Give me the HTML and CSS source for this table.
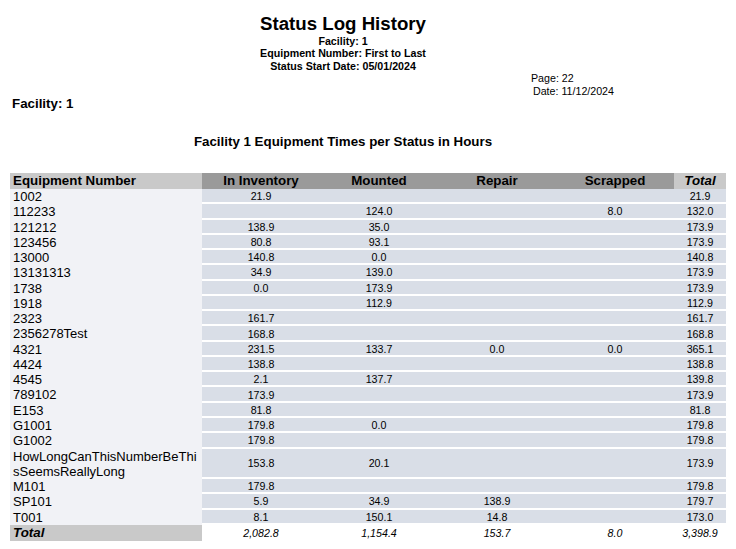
FILE: index.html
```html
<!DOCTYPE html>
<html>
<head>
<meta charset="utf-8">
<title>Status Log History</title>
<link rel="stylesheet" href="styles.css">
</head>
<body>
<div class="report-head">
  <h1 class="title">Status Log History</h1>
  <div class="sub">Facility: 1</div>
  <div class="sub">Equipment Number: First to Last</div>
  <div class="sub">Status Start Date: 05/01/2024</div>
</div>
<div class="meta">
  <div>Page: 22</div>
  <div class="meta-date">Date: 11/12/2024</div>
</div>
<div class="facility">Facility: 1</div>
<h2 class="section">Facility 1 Equipment Times per Status in Hours</h2>
<table class="grid">
  <colgroup>
    <col class="c-eq"><col class="c-st"><col class="c-st"><col class="c-st"><col class="c-st"><col class="c-tot">
  </colgroup>
  <thead>
    <tr>
      <th class="h-eq">Equipment Number</th>
      <th class="h-st">In Inventory</th>
      <th class="h-st">Mounted</th>
      <th class="h-st">Repair</th>
      <th class="h-st">Scrapped</th>
      <th class="h-tot">Total</th>
    </tr>
  </thead>
  <tbody>
    <tr><td class="eq">1002</td><td class="n">21.9</td><td class="n"></td><td class="n"></td><td class="n"></td><td class="n">21.9</td></tr>
    <tr><td class="eq">112233</td><td class="n"></td><td class="n">124.0</td><td class="n"></td><td class="n">8.0</td><td class="n">132.0</td></tr>
    <tr><td class="eq">121212</td><td class="n">138.9</td><td class="n">35.0</td><td class="n"></td><td class="n"></td><td class="n">173.9</td></tr>
    <tr><td class="eq">123456</td><td class="n">80.8</td><td class="n">93.1</td><td class="n"></td><td class="n"></td><td class="n">173.9</td></tr>
    <tr><td class="eq">13000</td><td class="n">140.8</td><td class="n">0.0</td><td class="n"></td><td class="n"></td><td class="n">140.8</td></tr>
    <tr><td class="eq">13131313</td><td class="n">34.9</td><td class="n">139.0</td><td class="n"></td><td class="n"></td><td class="n">173.9</td></tr>
    <tr><td class="eq">1738</td><td class="n">0.0</td><td class="n">173.9</td><td class="n"></td><td class="n"></td><td class="n">173.9</td></tr>
    <tr><td class="eq">1918</td><td class="n"></td><td class="n">112.9</td><td class="n"></td><td class="n"></td><td class="n">112.9</td></tr>
    <tr><td class="eq">2323</td><td class="n">161.7</td><td class="n"></td><td class="n"></td><td class="n"></td><td class="n">161.7</td></tr>
    <tr><td class="eq">2356278Test</td><td class="n">168.8</td><td class="n"></td><td class="n"></td><td class="n"></td><td class="n">168.8</td></tr>
    <tr><td class="eq">4321</td><td class="n">231.5</td><td class="n">133.7</td><td class="n">0.0</td><td class="n">0.0</td><td class="n">365.1</td></tr>
    <tr><td class="eq">4424</td><td class="n">138.8</td><td class="n"></td><td class="n"></td><td class="n"></td><td class="n">138.8</td></tr>
    <tr><td class="eq">4545</td><td class="n">2.1</td><td class="n">137.7</td><td class="n"></td><td class="n"></td><td class="n">139.8</td></tr>
    <tr><td class="eq">789102</td><td class="n">173.9</td><td class="n"></td><td class="n"></td><td class="n"></td><td class="n">173.9</td></tr>
    <tr><td class="eq">E153</td><td class="n">81.8</td><td class="n"></td><td class="n"></td><td class="n"></td><td class="n">81.8</td></tr>
    <tr><td class="eq">G1001</td><td class="n">179.8</td><td class="n">0.0</td><td class="n"></td><td class="n"></td><td class="n">179.8</td></tr>
    <tr><td class="eq">G1002</td><td class="n">179.8</td><td class="n"></td><td class="n"></td><td class="n"></td><td class="n">179.8</td></tr>
    <tr><td class="eq">HowLongCanThisNumberBeThisSeemsReallyLong</td><td class="n">153.8</td><td class="n">20.1</td><td class="n"></td><td class="n"></td><td class="n">173.9</td></tr>
    <tr><td class="eq">M101</td><td class="n">179.8</td><td class="n"></td><td class="n"></td><td class="n"></td><td class="n">179.8</td></tr>
    <tr><td class="eq">SP101</td><td class="n">5.9</td><td class="n">34.9</td><td class="n">138.9</td><td class="n"></td><td class="n">179.7</td></tr>
    <tr><td class="eq">T001</td><td class="n">8.1</td><td class="n">150.1</td><td class="n">14.8</td><td class="n"></td><td class="n">173.0</td></tr>
  </tbody>
  <tfoot>
    <tr>
      <td class="t-eq">Total</td>
      <td class="t-n">2,082.8</td>
      <td class="t-n">1,154.4</td>
      <td class="t-n">153.7</td>
      <td class="t-n">8.0</td>
      <td class="t-n">3,398.9</td>
    </tr>
  </tfoot>
</table>
</body>
</html>
```
FILE: styles.css
```css
html, body {
  margin: 0;
  padding: 0;
  background: #ffffff;
  color: #000000;
  font-family: "Liberation Sans", Arial, sans-serif;
}

.report-head {
  width: 686px;
  padding-top: 12.5px;
  text-align: center;
}

.title {
  margin: 0;
  font-size: 18.67px;
  line-height: 22px;
  font-weight: bold;
}

.sub {
  font-size: 10.67px;
  line-height: 12.5px;
  font-weight: bold;
}

.meta {
  margin-left: 531px;
  font-size: 10.67px;
  line-height: 12.5px;
}

.meta-date {
  padding-left: 2px;
}

.facility {
  padding-left: 12px;
  font-size: 13.33px;
  line-height: 13px;
  font-weight: bold;
}

.section {
  width: 686px;
  margin: 24px 0 0 0;
  text-align: center;
  font-size: 13.33px;
  line-height: 15px;
  font-weight: bold;
}

.grid {
  margin: 24px 0 0 10px;
  width: 716px;
  table-layout: fixed;
  border-collapse: collapse;
  border-spacing: 0;
}

.c-eq { width: 192px; }
.c-st { width: 118px; }
.c-tot { width: 52px; }

.grid th,
.grid td {
  padding: 0;
  border: 0;
}

.grid th {
  height: 16px;
  font-size: 13.33px;
  line-height: 16px;
  font-weight: bold;
  text-align: center;
  vertical-align: middle;
}

.grid th.h-eq {
  background: #c9c9c9;
  text-align: left;
  padding-left: 3px;
}

.grid th.h-st {
  background: #9a9a9a;
}

.grid th.h-tot {
  background: #c9c9c9;
  font-style: italic;
}

.grid td.eq {
  height: 15.27px;
  background: #f1f2f6;
  padding-left: 3px;
  font-size: 13px;
  line-height: 15.27px;
  word-break: break-all;
  vertical-align: middle;
}

.grid td.n {
  background: linear-gradient(to top, #ffffff 0, #ffffff 1.6px, #d9dee7 1.6px);
  font-size: 10.67px;
  line-height: 13px;
  text-align: center;
  vertical-align: middle;
}

.grid td.t-eq {
  height: 16px;
  background: #c9c9c9;
  padding-left: 3px;
  font-size: 13.33px;
  line-height: 16px;
  font-weight: bold;
  font-style: italic;
}

.grid td.t-n {
  font-size: 10.67px;
  line-height: 16px;
  font-style: italic;
  text-align: center;
}
```
